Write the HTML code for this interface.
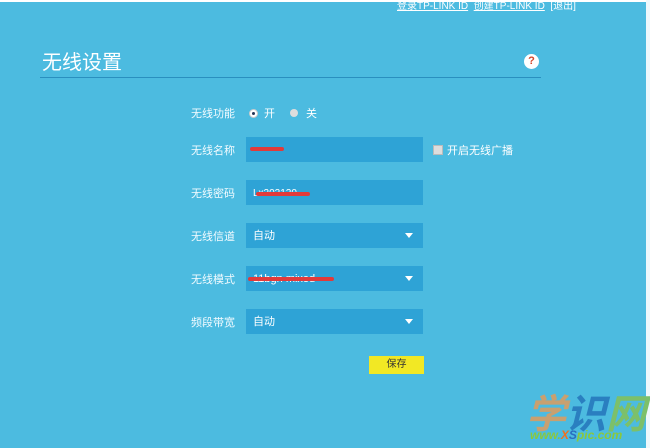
<!DOCTYPE html><html><head><meta charset="utf-8"><style>
body{margin:0;width:650px;height:448px;overflow:hidden;background:#4cbbe0;font-family:"Liberation Sans","Noto Sans CJK SC",sans-serif;position:relative;color:#fff}
.a{position:absolute}
.lab{position:absolute;left:191px;font-size:11px;color:#f2fbff}
.in{position:absolute;left:246px;width:177px;height:25px;background:#2ea3d6;font-size:11px;line-height:27px}
.in span{padding-left:7px}
.tri{position:absolute;right:10px;top:10px;border-left:4px solid transparent;border-right:4px solid transparent;border-top:5px solid #fff}
.red{position:absolute;height:4px;background:#e23a3a;border-radius:2px}
</style></head><body>
<div class="a" style="left:0;top:0;width:650px;height:2px;background:#fff"></div>
<div class="a" style="right:0;top:0;width:4px;height:448px;background:#eef8fc"></div>
<div class="a" style="left:397px;top:-3px;font-size:10px;color:#fff"><u>登录TP-LINK ID</u>&nbsp;&nbsp;<u>创建TP-LINK ID</u>&nbsp;&nbsp;[退出]</div>
<div class="a" style="left:42px;top:46px;font-size:20px;color:#fff">无线设置</div>
<div class="a" style="left:40px;top:77px;width:501px;height:1px;background:#2a8fbf"></div>
<div class="a" style="left:524px;top:54px;width:15px;height:15px;border-radius:50%;background:#fff;color:#d5452a;font-size:11px;font-weight:bold;text-align:center;line-height:15px">?</div>
<div class="lab" style="top:105px">无线功能</div>
<div class="a" style="left:249px;top:109px;width:7px;height:7px;border-radius:50%;background:#fff;border:1px solid #ccc"><div style="margin:2px;width:3px;height:3px;border-radius:50%;background:#235"></div></div>
<div class="a" style="left:264px;top:105px;font-size:11px">开</div>
<div class="a" style="left:290px;top:109px;width:8px;height:8px;border-radius:50%;background:#ddd"></div>
<div class="a" style="left:306px;top:105px;font-size:11px">关</div>
<div class="lab" style="top:142px">无线名称</div>
<div class="in" style="top:137px"></div><div class="red" style="left:250px;top:147px;width:34px"></div>
<div class="a" style="left:433px;top:145px;width:8px;height:8px;background:#ddd;border:1px solid #bbb"></div>
<div class="a" style="left:447px;top:142px;font-size:11px">开启无线广播</div>
<div class="lab" style="top:185px">无线密码</div>
<div class="in" style="top:180px"><span style="font-size:10px">Lx202120</span></div><div class="red" style="left:256px;top:192px;width:54px"></div>
<div class="lab" style="top:228px">无线信道</div>
<div class="in" style="top:223px"><span>自动</span><div class="tri"></div></div>
<div class="lab" style="top:271px">无线模式</div>
<div class="in" style="top:266px"><span>11bgn mixed</span><div class="tri"></div></div><div class="red" style="left:248px;top:277px;width:86px"></div>
<div class="lab" style="top:314px">频段带宽</div>
<div class="in" style="top:309px"><span>自动</span><div class="tri"></div></div>
<div class="a" style="left:369px;top:356px;width:55px;height:18px;background:#f2e824;color:#333;font-size:10px;text-align:center;line-height:18px">保存</div>
<div class="a" style="left:526px;top:382px;font-size:40px;font-weight:bold;font-style:italic;letter-spacing:0"><span style="color:#c8a070">学</span><span style="color:#2a7fc0">识</span><span style="color:#7cc06a">网</span></div>
<div class="a" style="left:530px;top:428px;font-size:12px;font-weight:bold;font-style:italic;color:#8bc83c">www.<span style="color:#f07020">X</span><span style="color:#2a6fc0">S</span>pic.com</div>
</body></html>
